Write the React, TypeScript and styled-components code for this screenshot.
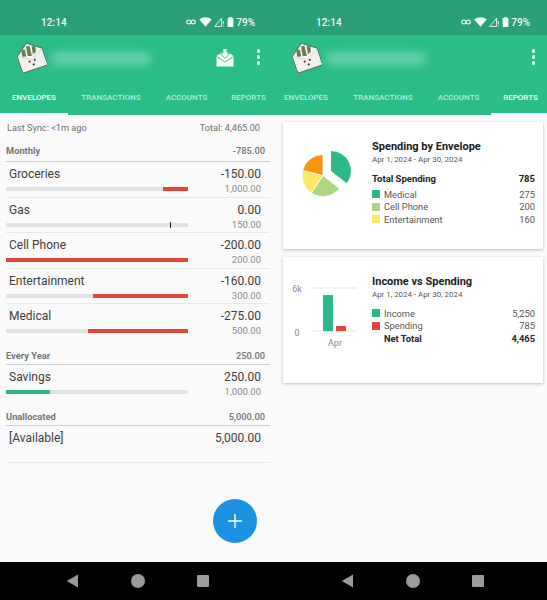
import React from 'react';
import styled, { createGlobalStyle } from 'styled-components';

const GlobalStyle = createGlobalStyle`
  html, body {
    margin: 0;
    padding: 0;
    background: #fafafa;
  }
  body {
    font-family: Roboto, "Liberation Sans", sans-serif;
  }
  * {
    box-sizing: border-box;
  }
`;

const TABS = ['ENVELOPES', 'TRANSACTIONS', 'ACCOUNTS', 'REPORTS'];
const TAB_WIDTHS = [68, 86, 65, 59];

interface Envelope {
  name: string;
  amount: string;
  budget?: string;
  used?: number;
  span?: number;
  color?: string;
  marker?: number;
}

const monthly: Envelope[] = [
  { name: 'Groceries', amount: '-150.00', budget: '1,000.00', used: 86, span: 14, color: '#e2473b' },
  { name: 'Gas', amount: '0.00', budget: '150.00', marker: 90 },
  { name: 'Cell Phone', amount: '-200.00', budget: '200.00', used: 0, span: 100, color: '#e2473b' },
  { name: 'Entertainment', amount: '-160.00', budget: '300.00', used: 48, span: 52, color: '#e2473b' },
  { name: 'Medical', amount: '-275.00', budget: '500.00', used: 45, span: 55, color: '#e2473b' },
];

const App: React.FC = () => (
  <>
    <GlobalStyle />
    <Screens>
      <Phone active={0} inbox>
        <EnvelopesScreen />
      </Phone>
      <Phone active={3} scrolled>
        <ReportsScreen />
      </Phone>
    </Screens>
  </>
);

interface PhoneProps {
  active: number;
  inbox?: boolean;
  scrolled?: boolean;
  children: React.ReactNode;
}

const Phone: React.FC<PhoneProps> = ({ active, inbox, scrolled, children }) => (
  <StyledPhone>
    <StatusBar>
      <Clock>12:14</Clock>
      <StatusIcons>
        <svg width="10" height="6" viewBox="0 0 10 6" fill="none" stroke="#dff5ec" strokeWidth="1.2">
          <ellipse cx="2.8" cy="3" rx="2.1" ry="1.9" />
          <ellipse cx="7.2" cy="3" rx="2.1" ry="1.9" />
        </svg>
        <svg width="13" height="10" viewBox="0 0 13 10">
          <path d="M0.3 2.6C3.8 -0.5 9.2 -0.5 12.7 2.6L6.5 9.8Z" fill="#f4fbf8" />
        </svg>
        <svg width="10" height="10" viewBox="0 0 10 10" fill="none" stroke="#f4fbf8" strokeWidth="0.9">
          <path d="M0.8 9.4L7.6 1.2V9.4Z" />
          <path d="M9.3 4V7.4M9.3 8.6V9.6" />
        </svg>
        <svg width="7" height="10" viewBox="0 0 7 10">
          <path d="M2.2 0H4.8V1H6.4V10H0.6V1H2.2Z" fill="#f4fbf8" />
        </svg>
        <Battery>79%</Battery>
      </StatusIcons>
    </StatusBar>
    <AppBar>
      <Logo />
      <BlurredTitle />
      {inbox && <InboxIcon />}
      <MoreDots>
        <i />
        <i />
        <i />
      </MoreDots>
    </AppBar>
    <TabRow $scrolled={scrolled}>
      {TABS.map((tab, i) => (
        <Tab key={tab} $active={i === active} $width={TAB_WIDTHS[i]}>
          {tab}
        </Tab>
      ))}
    </TabRow>
    <Content>{children}</Content>
    <NavBar>
      <svg width="13" height="14" viewBox="0 0 13 14">
        <path d="M12 0.5V13.5L0.8 7Z" fill="#9a9a9a" />
      </svg>
      <svg width="14" height="14" viewBox="0 0 14 14">
        <circle cx="7" cy="7" r="7" fill="#9a9a9a" />
      </svg>
      <svg width="12" height="12" viewBox="0 0 12 12">
        <rect width="12" height="12" rx="1" fill="#9a9a9a" />
      </svg>
    </NavBar>
  </StyledPhone>
);

const Logo: React.FC = () => (
  <LogoSvg width="31" height="32" viewBox="0 0 31 32">
    <g transform="rotate(-19 15 17)">
      <path
        d="M2.5 11L15.5 1.5L28.5 11V27.5C28.5 28.3 28 28.8 27.2 28.8H3.8C3 28.8 2.5 28.3 2.5 27.5Z"
        fill="#f3f3ef"
        stroke="#686b68"
        strokeWidth="1"
      />
      <path d="M7 13L8.5 6.5L12 7L11 14ZM12.5 14L14 4.5L17.5 5L16.5 15.5ZM18 14L19.5 6L23 7L21.5 13Z" fill="#65804f" />
      <path d="M3 11.5L15.5 19L28 11.5V28H3Z" fill="#f0f0ec" />
      <path d="M3 11.5L15.5 19L28 11.5" fill="none" stroke="#c9cbc6" strokeWidth="0.6" />
      <circle cx="12.5" cy="20" r="1" fill="#333" />
      <circle cx="18" cy="20" r="1" fill="#333" />
      <circle cx="15.5" cy="24" r="1.1" fill="#333" />
    </g>
  </LogoSvg>
);

const InboxIcon: React.FC = () => (
  <InboxSvg width="18" height="19" viewBox="0 0 18 19">
    <path d="M0.5 8L9 2L17.5 8V18.5H0.5Z" fill="#fbfefd" />
    <path d="M0.5 8.5L9 14L17.5 8.5" fill="none" stroke="#2bbd88" strokeWidth="0.9" />
    <path d="M7 0.5H11V5H13.8L9 10.5L4.2 5H7Z" fill="#fbfefd" stroke="#2bbd88" strokeWidth="0.9" />
  </InboxSvg>
);

const EnvelopeRow: React.FC<{ item: Envelope; last?: boolean }> = ({ item, last }) => (
  <StyledRow $last={last}>
    <RowName>{item.name}</RowName>
    <RowAmount>{item.amount}</RowAmount>
    {item.budget && (
      <>
        <BarTrack>
          {item.span !== undefined && (
            <BarFill style={{ left: `${item.used}%`, width: `${item.span}%` }} $color={item.color} />
          )}
          {item.marker !== undefined && <BarMarker style={{ left: `${item.marker}%` }} />}
        </BarTrack>
        <RowBudget>{item.budget}</RowBudget>
      </>
    )}
  </StyledRow>
);

const EnvelopesScreen: React.FC = () => (
  <EnvelopeList>
    <SyncRow>
      <span>Last Sync: &lt;1m ago</span>
      <span>Total: 4,465.00</span>
    </SyncRow>
    <GroupHeader>
      <span>Monthly</span>
      <span>-785.00</span>
    </GroupHeader>
    {monthly.map((item, i) => (
      <EnvelopeRow key={item.name} item={item} last={i === monthly.length - 1} />
    ))}
    <GroupHeader $gap>
      <span>Every Year</span>
      <span>250.00</span>
    </GroupHeader>
    <EnvelopeRow
      item={{ name: 'Savings', amount: '250.00', budget: '1,000.00', used: 0, span: 24, color: '#2bb585' }}
      last
    />
    <GroupHeader $gap>
      <span>Unallocated</span>
      <span>5,000.00</span>
    </GroupHeader>
    <AvailableRow>
      <RowName>[Available]</RowName>
      <RowAmount>5,000.00</RowAmount>
    </AvailableRow>
    <Fab aria-label="add">
      <svg width="16" height="16" viewBox="0 0 16 16" stroke="#fff" strokeWidth="1.4">
        <path d="M8 1V15M1 8H15" />
      </svg>
    </Fab>
  </EnvelopeList>
);

// pie wedge between two clock angles, in degrees
const wedge = (cx: number, cy: number, r: number, from: number, to: number) => {
  const pt = (a: number) => {
    const rad = ((a - 90) * Math.PI) / 180;
    return `${(cx + r * Math.cos(rad)).toFixed(2)} ${(cy + r * Math.sin(rad)).toFixed(2)}`;
  };
  return `M${cx} ${cy}L${pt(from)}A${r} ${r} 0 0 1 ${pt(to)}Z`;
};

const PieChart: React.FC = () => (
  <svg width="60" height="54" viewBox="0 0 60 54">
    <path d={wedge(31, 25, 20, 0, 128)} fill="#2bb98a" />
    <path d={wedge(23, 29.5, 21, 128, 214)} fill="#aed581" stroke="#fff" strokeWidth="0.8" />
    <path d={wedge(23, 29.5, 21, 214, 284)} fill="#fde869" stroke="#fff" strokeWidth="0.8" />
    <path d={wedge(23, 29.5, 21, 284, 360)} fill="#f9950f" stroke="#fff" strokeWidth="0.8" />
  </svg>
);

const BarChart: React.FC = () => (
  <svg width="65" height="46" viewBox="0 0 65 46">
    <path d="M21 1H65M21 44H65" stroke="#e3e3e3" strokeWidth="1" fill="none" />
    <rect x="31" y="8" width="10" height="36" fill="#2bb98a" />
    <rect x="44" y="39" width="10" height="5" fill="#e2473b" />
  </svg>
);

const ReportsScreen: React.FC = () => (
  <Reports>
    <ReportCard $height={127}>
      <ChartSlot>
        <PieChart />
      </ChartSlot>
      <ReportBody>
        <ReportTitle>Spending by Envelope</ReportTitle>
        <ReportDate>Apr 1, 2024 - Apr 30, 2024</ReportDate>
        <TotalRow>
          <span>Total Spending</span>
          <span>785</span>
        </TotalRow>
        <LegendRow>
          <Swatch $color="#2bb98a" />
          <span>Medical</span>
          <em>275</em>
        </LegendRow>
        <LegendRow>
          <Swatch $color="#aed581" />
          <span>Cell Phone</span>
          <em>200</em>
        </LegendRow>
        <LegendRow>
          <Swatch $color="#fde869" />
          <span>Entertainment</span>
          <em>160</em>
        </LegendRow>
      </ReportBody>
    </ReportCard>
    <ReportCard $height={126}>
      <BarSlot>
        <AxisLabels>
          <span>6k</span>
          <span>0</span>
        </AxisLabels>
        <div>
          <BarChart />
          <MonthLabel>Apr</MonthLabel>
        </div>
      </BarSlot>
      <ReportBody>
        <ReportTitle>Income vs Spending</ReportTitle>
        <ReportDate>Apr 1, 2024 - Apr 30, 2024</ReportDate>
        <LegendGap />
        <LegendRow>
          <Swatch $color="#2bb98a" />
          <span>Income</span>
          <em>5,250</em>
        </LegendRow>
        <LegendRow>
          <Swatch $color="#ef4040" />
          <span>Spending</span>
          <em>785</em>
        </LegendRow>
        <LegendRow $bold>
          <Swatch />
          <span>Net Total</span>
          <em>4,465</em>
        </LegendRow>
      </ReportBody>
    </ReportCard>
  </Reports>
);

const Screens = styled.div`
  display: grid;
  grid-template-columns: 275px 275px;
  width: 547px;
  height: 600px;
  overflow: hidden;
`;

const StyledPhone = styled.div`
  display: flex;
  flex-direction: column;
  height: 600px;
  overflow: hidden;
  background: #fafafa;
`;

const StatusBar = styled.div`
  display: flex;
  align-items: center;
  justify-content: space-between;
  flex: none;
  height: 35px;
  padding: 9px 20px 0 41px;
  background: #2b9f78;
  color: #f1faf6;
  font-size: 10px;
  font-weight: 500;
`;

const Clock = styled.span`
  letter-spacing: 0.1px;
`;

const StatusIcons = styled.div`
  display: flex;
  align-items: center;
  gap: 2.5px;
`;

const Battery = styled.span`
  font-size: 10px;
`;

const AppBar = styled.div`
  display: flex;
  align-items: center;
  flex: none;
  height: 50px;
  padding: 0 15px 6px 16px;
  background: #2bbd88;
`;

const LogoSvg = styled.svg`
  flex: none;
`;

const BlurredTitle = styled.div`
  width: 100px;
  height: 13px;
  margin: 3px 0 0 4px;
  border-radius: 6px;
  background: #67d0ac;
  filter: blur(4px);
`;

const InboxSvg = styled.svg`
  margin-left: auto;
`;

const MoreDots = styled.div`
  display: flex;
  flex-direction: column;
  gap: 2.5px;
  margin-left: 23px;
  ${BlurredTitle} + & {
    margin-left: auto;
  }
  i {
    display: block;
    width: 3.5px;
    height: 3.5px;
    border-radius: 50%;
    background: #f0faf6;
  }
`;

const TabRow = styled.div<{ $scrolled?: boolean }>`
  display: flex;
  flex: none;
  height: 30px;
  margin-left: ${(p) => (p.$scrolled ? '-3px' : '0')};
  background: #2bbd88;
`;

const Tab = styled.div<{ $active: boolean; $width: number }>`
  display: flex;
  justify-content: center;
  flex: none;
  width: ${(p) => p.$width}px;
  padding-top: 7.5px;
  border-bottom: 2px solid ${(p) => (p.$active ? '#f6fdfa' : 'transparent')};
  color: ${(p) => (p.$active ? '#f6fdfa' : '#b5ead6')};
  font-size: 8px;
  font-weight: 500;
  white-space: nowrap;
`;

const Content = styled.div`
  position: relative;
  flex: 1;
  min-height: 0;
`;

const NavBar = styled.div`
  display: flex;
  align-items: center;
  justify-content: center;
  flex: none;
  gap: 52px;
  height: 38px;
  background: #000;
`;

const EnvelopeList = styled.div`
  display: flex;
  flex-direction: column;
  height: 100%;
  padding: 0 5px 0 6px;
`;

const SyncRow = styled.div`
  display: flex;
  justify-content: space-between;
  padding: 7px 10px 0 1px;
  color: #6f6f6f;
  font-size: 9.2px;
`;

const GroupHeader = styled.div<{ $gap?: boolean }>`
  display: flex;
  flex: none;
  justify-content: space-between;
  height: ${(p) => (p.$gap ? '25px' : '23px')};
  margin-top: ${(p) => (p.$gap ? '0' : '6px')};
  padding: ${(p) => (p.$gap ? '10px' : '6px')} 5px 0 0;
  border-bottom: 1px solid #cfcfcf;
  color: #757575;
  font-size: 9.3px;
  font-weight: 700;
  span:last-child {
    font-weight: 500;
  }
`;

const StyledRow = styled.div<{ $last?: boolean }>`
  display: grid;
  flex: none;
  grid-template-columns: 182px 1fr;
  grid-template-rows: 20px 15.6px;
  height: 35.6px;
  padding-right: 9px;
  border-bottom: 1px solid ${(p) => (p.$last ? 'transparent' : '#e8e8e8')};
`;

const RowName = styled.div`
  padding: 5px 0 0 3px;
  color: #3c3c3c;
  font-size: 12px;
  white-space: nowrap;
`;

const RowAmount = styled.div`
  padding-top: 5px;
  color: #3c3c3c;
  font-size: 12px;
  text-align: right;
  white-space: nowrap;
`;

const BarTrack = styled.div`
  position: relative;
  align-self: start;
  height: 4px;
  margin-top: 5px;
  background: #e2e2e2;
`;

const BarFill = styled.div<{ $color?: string }>`
  position: absolute;
  top: 0;
  bottom: 0;
  background: ${(p) => p.$color};
`;

const BarMarker = styled.div`
  position: absolute;
  top: -1px;
  bottom: -1px;
  width: 1px;
  background: #222;
`;

const RowBudget = styled.div`
  padding-top: 1px;
  color: #8a8a8a;
  font-size: 9.5px;
  text-align: right;
`;

const AvailableRow = styled.div`
  display: flex;
  flex: none;
  justify-content: space-between;
  height: 37px;
  padding-right: 9px;
  border-bottom: 1px solid #e8e8e8;
`;

const Fab = styled.button`
  position: absolute;
  right: 18px;
  bottom: 19px;
  display: flex;
  align-items: center;
  justify-content: center;
  width: 44px;
  height: 44px;
  padding: 0;
  border: none;
  border-radius: 50%;
  background: #1e91e4;
`;

const Reports = styled.div`
  display: flex;
  flex-direction: column;
  gap: 8px;
  padding: 7px 7px 0 8px;
`;

const ReportCard = styled.div<{ $height: number }>`
  display: flex;
  height: ${(p) => p.$height}px;
  background: #fff;
  box-shadow: 0 1px 3px rgba(0, 0, 0, 0.25);
`;

const ChartSlot = styled.div`
  flex: none;
  width: 89px;
  padding: 24px 0 0 17px;
`;

const BarSlot = styled.div`
  display: flex;
  flex: none;
  width: 89px;
  padding: 30px 0 0 9px;
`;

const AxisLabels = styled.div`
  display: flex;
  flex-direction: column;
  justify-content: space-between;
  flex: none;
  width: 10px;
  height: 54px;
  margin: -3px -10px 0 0;
  color: #8b8b8b;
  font-size: 9px;
  text-align: center;
`;

const MonthLabel = styled.div`
  margin-top: 1px;
  padding-left: 21px;
  color: #8b8b8b;
  font-size: 9px;
  text-align: center;
`;

const ReportBody = styled.div`
  display: flex;
  flex: 1;
  flex-direction: column;
  padding: 18px 8px 0 0;
`;

const ReportTitle = styled.div`
  color: #202020;
  font-size: 11px;
  font-weight: 700;
  line-height: 13px;
  white-space: nowrap;
`;

const ReportDate = styled.div`
  margin-top: 1px;
  color: #555;
  font-size: 7.9px;
  line-height: 11px;
  white-space: nowrap;
`;

const TotalRow = styled.div`
  display: flex;
  justify-content: space-between;
  margin: 7px 0 2px;
  color: #222;
  font-size: 9.5px;
  font-weight: 700;
  line-height: 14px;
`;

const LegendGap = styled.div`
  height: 7px;
`;

const LegendRow = styled.div<{ $bold?: boolean }>`
  display: flex;
  align-items: center;
  height: 12.5px;
  color: ${(p) => (p.$bold ? '#222' : '#555')};
  font-size: 9.3px;
  font-weight: ${(p) => (p.$bold ? 700 : 400)};
  em {
    margin-left: auto;
    font-style: normal;
  }
`;

const Swatch = styled.i<{ $color?: string }>`
  flex: none;
  width: 8px;
  height: 8px;
  margin-right: 4px;
  background: ${(p) => p.$color || 'transparent'};
`;

export default App;
